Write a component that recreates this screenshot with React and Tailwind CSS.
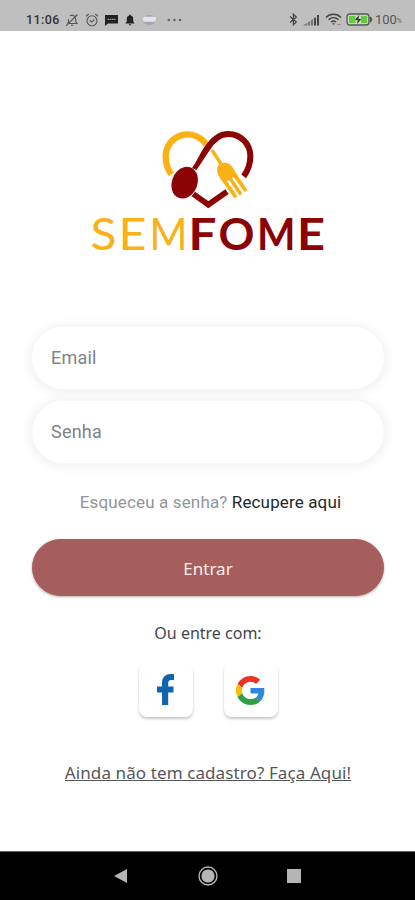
import { useState } from 'react'

const LETTERS = [
  { char: 'S', x: 10.5, width: 26, bold: false },
  { char: 'E', x: 38.5, width: 28, bold: false },
  { char: 'M', x: 69.5, width: 38, bold: false },
  { char: 'F', x: 108.5, width: 28, bold: true },
  { char: 'O', x: 138.5, width: 36, bold: true },
  { char: 'M', x: 177, width: 38.5, bold: true },
  { char: 'E', x: 217, width: 28, bold: true },
]

function StatusBar() {
  return (
    <div className="h-[31px] shrink-0 bg-[#bfbfbf] pl-[26px] pr-[13px] pt-[9px] flex items-start justify-between text-[#333]">
      <div className="flex items-center h-[21px]">
        <span className="w-[35px] pt-px text-[12.5px] font-medium tracking-[0.4px] font-['Roboto',sans-serif] whitespace-nowrap">11:06</span>
        <svg className="ml-[4px]" width="14" height="14" viewBox="0 0 14 14" fill="none" stroke="#555" strokeWidth="1.1">
          <path d="M3 10.5h9l-1.3-2V6A3.7 3.7 0 0 0 5 2.8M3.5 6v3L2.6 10.5M6 12.2h2.4M1 12.8 12.5 1.5" />
        </svg>
        <svg className="ml-[6px]" width="14" height="14" viewBox="0 0 14 14" fill="none" stroke="#555" strokeWidth="1.1">
          <circle cx="7" cy="7.8" r="5" />
          <path d="M1 3.2 3.7 1M13 3.2 10.3 1M4.8 7.2 6.8 9l2.6-2.4" />
        </svg>
        <svg className="ml-[6px]" width="13" height="12" viewBox="0 0 13 12">
          <path d="M0 1h13v8.5H3L0 12z" fill="#222" />
          <path d="M2.5 5.3h8" stroke="#999" strokeWidth="1.2" strokeDasharray="1.6 .6" />
        </svg>
        <svg className="ml-[7px]" width="10" height="12" viewBox="0 0 10 12" fill="#222">
          <path d="M.7 9.6V8.7l1.1-1.2V4.7C1.8 3 2.8 1.8 4.2 1.5V.8h1.6v.7c1.4.3 2.4 1.5 2.4 3.2v2.8l1.1 1.2v.9zM3.8 10.2h2.4c0 1.6-2.4 1.6-2.4 0z" />
        </svg>
        <svg className="ml-[8px]" width="13" height="12" viewBox="0 0 13 12">
          <rect x=".5" y="1" width="12" height="10" rx="5" fill="#a6a6b8" />
          <rect x="0" y="2.8" width="13" height="5" rx="2" fill="#e4e3ee" />
        </svg>
        <svg className="ml-[11px]" width="15" height="4" viewBox="0 0 15 4" fill="#666">
          <circle cx="1.8" cy="2" r="1.3" />
          <circle cx="7.4" cy="2" r="1.3" />
          <circle cx="13" cy="2" r="1.3" />
        </svg>
      </div>
      <div className="flex items-center h-[21px]">
        <svg width="9" height="13" viewBox="0 0 9 13" fill="none" stroke="#444" strokeWidth="1.2">
          <path d="M1 3.5 7.3 9 4.4 11.8V1.2L7.3 4 1 9.5" />
        </svg>
        <svg className="ml-[5px]" width="17" height="12" viewBox="0 0 17 12">
          <path d="M0 11.5 4 9v2.5zM4.8 8.5 7 7v4.5H4.8zM7.9 6.3l2.1-1.2v6.4H7.9z" fill="#777" />
          <path d="M11 3.8h2v7.7h-2zM14 1h2v10.5h-2z" fill="#444" />
        </svg>
        <svg className="ml-[5px]" width="17" height="13" viewBox="0 0 17 13" fill="none" stroke="#444" strokeWidth="1.5">
          <path d="M1 4.5c4-4.2 11-4.2 15 0M3.5 6.8c3-2.8 7-2.8 10 0M6 9c1.6-1.3 3.4-1.3 5 0" />
          <path d="m7 10.2 1.5 1.8 1.5-1.8z" fill="#444" stroke="none" />
          <path d="M12.5 11.5h3" stroke="#888" strokeWidth="1" />
        </svg>
        <svg className="ml-[4px]" width="27" height="13" viewBox="0 0 27 13">
          <rect x="1" y="1" width="22" height="11" rx="2.8" fill="#c8d8bd" stroke="#555" strokeWidth="1.3" />
          <path d="M24 3.5c3 .8 3 5.2 0 6z" fill="#555" />
          <path d="M3 3h6.5v7H3zM15 3h6v7h-6z" fill="#62cc3c" />
          <path d="m13 2-4 5h2.7l-.5 4 4-5h-2.7z" fill="#333" />
        </svg>
        <span className="ml-[2px] pt-px text-[13px] font-['Roboto',sans-serif] text-[#555]">100</span>
        <span className="mt-[4px] text-[7px] font-['Roboto',sans-serif] text-[#666]">%</span>
      </div>
    </div>
  )
}

function Logo() {
  return (
    <div className="flex flex-col items-center w-[255px] -ml-px">
      <svg className="ml-[5px]" width="120" height="90" viewBox="0 0 360 270" fill="none">
        <path d="M64 163Q47 142 47 108A66 66 0 0 1 170 76" stroke="#f9b115" strokeWidth="19" />
        <path d="M170 88C194 49 216 42 235 42A66 66 0 0 1 301 108C301 135 293 153 281 169" stroke="#8b0304" strokeWidth="18" />
        <path d="M126 144C145 116 150 101 163 81L178 92C164 112 155 128 139 150z" fill="#8b0304" />
        <ellipse cx="104" cy="188" rx="38" ry="49" transform="rotate(22 104 188)" fill="#8b0304" />
        <path d="M130 222 175 254 231 215" stroke="#8b0304" strokeWidth="17" />
        <path d="M186 90 215 135" stroke="#f9b115" strokeWidth="10" />
        <path
          d="M204 137C212 126 231 126 241 134C251 143 253 152 260 162L292 210L284 216L251 172L246 175L277 220L269 227L237 180L231 183L262 229L253 235L216 183C207 170 196 153 204 137z"
          fill="#f9b115"
        />
      </svg>
      <svg className="-mt-[10px]" width="255" height="60" viewBox="0 0 255 60" fontFamily="Lato, sans-serif" fontSize="43.5">
        {LETTERS.map(l => (
          <text
            key={l.x}
            x={l.x}
            y="50"
            textLength={l.width}
            lengthAdjust="spacingAndGlyphs"
            fontWeight={l.bold ? 700 : 400}
            fill={l.bold ? '#8b0304' : '#f9b115'}
          >
            {l.char}
          </text>
        ))}
      </svg>
    </div>
  )
}

function Field({ type, placeholder, value, onChange }) {
  return (
    <input
      type={type}
      placeholder={placeholder}
      value={value}
      onChange={e => onChange(e.target.value)}
      className="block w-full h-[62px] rounded-full bg-white pl-[19px] pr-5 pb-px text-[18px] tracking-[0.2px] text-[#808389] placeholder:text-[#808389] font-['Roboto',sans-serif] shadow-[0_1px_10px_4px_rgba(0,0,0,0.05)] focus:outline-none"
    />
  )
}

function SocialButton({ label, children }) {
  return (
    <button
      type="button"
      aria-label={label}
      className="w-[54px] h-[54px] rounded-[8px] bg-white flex items-center justify-center shadow-[0_2px_3px_rgba(0,0,0,0.22)]"
    >
      {children}
    </button>
  )
}

function NavBar() {
  return (
    <div className="h-[49px] shrink-0 bg-black border-t border-[#666] pl-[114px] pr-[114px] flex items-center justify-between">
      <svg width="14" height="16" viewBox="0 0 14 16" fill="#b5b5b5">
        <path d="M0 8 13 1v14z" />
      </svg>
      <svg width="20" height="20" viewBox="0 0 20 20">
        <circle cx="10" cy="10" r="9" fill="none" stroke="#b5b5b5" strokeWidth="1.4" />
        <circle cx="10" cy="10" r="6.6" fill="#b5b5b5" />
      </svg>
      <span className="w-[14px] h-[14px] bg-[#b5b5b5]" />
    </div>
  )
}

export default function App() {
  const [email, setEmail] = useState('')
  const [senha, setSenha] = useState('')

  return (
    <div className="w-full h-[900px] bg-white flex flex-col overflow-hidden">
      <StatusBar />

      <main className="flex-1 flex flex-col items-center pl-8 pr-[31px] pt-[89px]">
        <Logo />

        <form className="w-full mt-[67px] flex flex-col" onSubmit={e => e.preventDefault()}>
          <div className="flex flex-col gap-3">
            <Field type="email" placeholder="Email" value={email} onChange={setEmail} />
            <Field type="password" placeholder="Senha" value={senha} onChange={setSenha} />
          </div>

          <p className="mt-[27px] h-6 leading-6 pl-[5px] text-center text-[17px] tracking-[0.14px] text-[#92959b] font-['Roboto',sans-serif] whitespace-nowrap">
            Esqueceu a senha? <a className="text-[#26282c]">Recupere aqui</a>
          </p>

          <button
            type="submit"
            className="mt-[25px] h-[57px] pt-[2px] rounded-full bg-[#a65e5d] border border-[#b0595a] text-[#fbeeea] text-[17px] font-['Noto_Sans',sans-serif] shadow-[0_1px_3px_rgba(0,0,0,0.3)]"
          >
            Entrar
          </button>
        </form>

        <p className="mt-[25px] h-6 leading-6 text-[16px] text-[#44464a] font-['Noto_Sans',sans-serif] whitespace-nowrap">Ou entre com:</p>

        <div className="mt-[18px] flex gap-[31px]">
          <SocialButton label="Facebook">
            <svg width="18" height="32" viewBox="0 0 18 32" fill="#1065ad">
              <path d="M5 31V18.500H0v-6h5V9C5 3.500 8.500 0 13 0h4v6h-2.500c-2.300 0-3.300 1-3.300 3v3.500H16.500v6h-5.300V31z" />
            </svg>
          </SocialButton>
          <SocialButton label="Google">
            <svg width="29" height="29" viewBox="0 0 48 48">
              <path fill="#ea3325" d="M24 9.500c3.500 0 6.700 1.200 9.200 3.600l6.900-6.900C35.900 2.400 30.500 0 24 0 14.600 0 6.500 5.400 2.600 13.200l8 6.200C12.400 13.700 17.700 9.500 24 9.500z" />
              <path fill="#2f86dd" d="M47 24.500c0-1.600-.2-3.100-.4-4.500H24v9h12.900c-.6 3-2.200 5.500-4.700 7.200l7.700 6c4.500-4.200 7.100-10.400 7.100-17.700z" />
              <path fill="#fbbc05" d="M10.500 28.600c-.5-1.400-.8-3-.8-4.600s.3-3.200.8-4.600l-8-6.200C.9 16.500 0 20.100 0 24s.9 7.500 2.600 10.800z" />
              <path fill="#2f9e45" d="M24 48c6.500 0 11.900-2.100 15.900-5.800l-7.700-6c-2.200 1.400-4.900 2.300-8.200 2.300-6.300 0-11.600-4.200-13.500-9.900l-7.900 6.200C6.500 42.600 14.600 48 24 48z" />
            </svg>
          </SocialButton>
        </div>

        <a className="mt-[44px] h-6 leading-6 text-[17px] tracking-[0.1px] text-[#55575a] underline font-['Noto_Sans',sans-serif] whitespace-nowrap">
          Ainda não tem cadastro? Faça Aqui!
        </a>
      </main>

      <NavBar />
    </div>
  )
}
